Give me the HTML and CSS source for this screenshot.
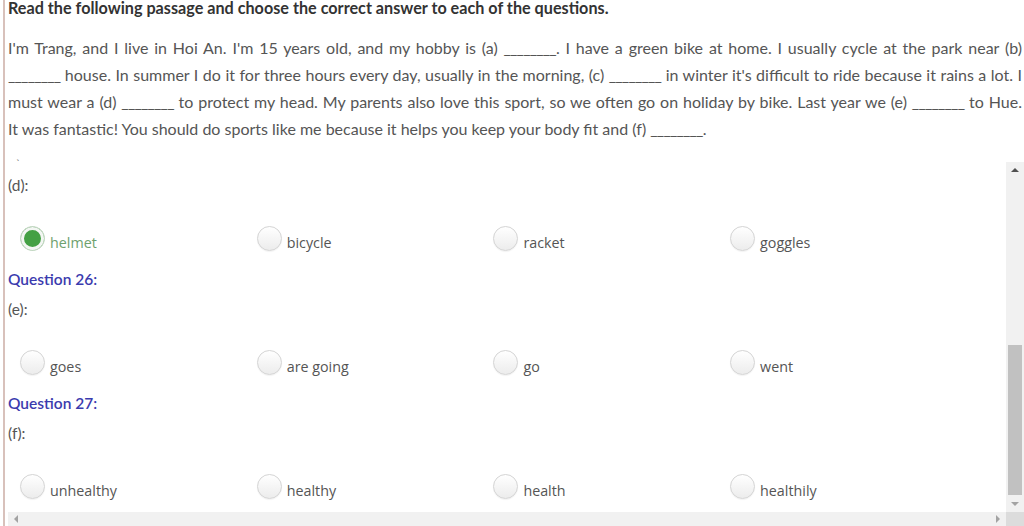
FILE: index.html
```html
<!DOCTYPE html>
<html lang="en">
<head>
<meta charset="utf-8">
<title>Reading passage</title>
<link rel="stylesheet" href="styles.css">
</head>
<body>
<div class="page">
  <h1 class="title">Read the following passage and choose the correct answer to each of the questions.</h1>
  <p class="passage">
    <span class="ln">I'm Trang, and I live in Hoi An. I'm 15 years old, and my hobby is (a) <span class="blank">________</span>. I have a green bike at home. I usually cycle at the park near (b)</span>
    <span class="ln"><span class="blank">________</span> house. In summer I do it for three hours every day, usually in the morning, (c) <span class="blank">________</span> in winter it's difficult to ride because it rains a lot. I</span>
    <span class="ln">must wear a (d) <span class="blank">________</span> to protect my head. My parents also love this sport, so we often go on holiday by bike. Last year we (e) <span class="blank">________</span> to Hue.</span>
    <span class="ln last">It was fantastic! You should do sports like me because it helps you keep your body fit and (f) <span class="blank">________</span>.</span>
  </p>
  <div class="tick">`</div>
  <div class="scroller">
    <div class="viewport">
      <div class="q first">
        <div class="label">(d):</div>
        <div class="options">
          <label class="opt checked"><span class="radio"></span><span class="otext">helmet</span></label>
          <label class="opt"><span class="radio"></span><span class="otext">bicycle</span></label>
          <label class="opt"><span class="radio"></span><span class="otext">racket</span></label>
          <label class="opt"><span class="radio"></span><span class="otext">goggles</span></label>
        </div>
      </div>
      <div class="q">
        <div class="qtitle">Question 26:</div>
        <div class="label">(e):</div>
        <div class="options">
          <label class="opt"><span class="radio"></span><span class="otext">goes</span></label>
          <label class="opt"><span class="radio"></span><span class="otext">are going</span></label>
          <label class="opt"><span class="radio"></span><span class="otext">go</span></label>
          <label class="opt"><span class="radio"></span><span class="otext">went</span></label>
        </div>
      </div>
      <div class="q">
        <div class="qtitle">Question 27:</div>
        <div class="label">(f):</div>
        <div class="options">
          <label class="opt"><span class="radio"></span><span class="otext">unhealthy</span></label>
          <label class="opt"><span class="radio"></span><span class="otext">healthy</span></label>
          <label class="opt"><span class="radio"></span><span class="otext">health</span></label>
          <label class="opt"><span class="radio"></span><span class="otext">healthily</span></label>
        </div>
      </div>
    </div>
    <div class="vbar">
      <div class="btn"><span class="arr up"></span></div>
      <div class="track"></div>
      <div class="thumb"></div>
      <div class="btn"><span class="arr down"></span></div>
    </div>
    <div class="hbar">
      <div class="btn"><span class="arr left"></span></div>
      <div class="htrack"></div>
      <div class="btn"><span class="arr right"></span></div>
    </div>
    <div class="corner"></div>
  </div>
</div>
</body>
</html>
```
FILE: styles.css
```css
* { box-sizing: border-box; }
html, body { margin: 0; padding: 0; background: #fff; }
body {
  font-family: Lato, "Open Sans", "Liberation Sans", sans-serif;
  color: #555;
  width: 1024px;
  height: 526px;
  overflow: hidden;
}
.page {
  margin-left: 3px;
  border-left: 2px solid #d8c1bb;
  padding-left: 3px;
  height: 526px;
  display: flex;
  flex-direction: column;
}
.title {
  margin: 0;
  font-size: 16.2px;
  line-height: 16px;
  font-weight: 700;
  color: #333;
}
.passage {
  margin: 18px 0 0 0;
  font-size: 16px;
  line-height: 27px;
  color: #555;
  padding-right: 2px;
}
.ln {
  display: block;
  text-align: justify;
  text-align-last: justify;
  word-spacing: -2px;
}
.ln.last { text-align-last: left; word-spacing: normal; }
.blank { letter-spacing: -0.8px; word-spacing: normal; }
.tick {
  height: 20px;
  padding: 12px 0 0 8px;
  font-size: 11px;
  line-height: 20px;
  color: #777;
}
.scroller {
  flex: 1;
  display: grid;
  grid-template-columns: 1fr 18px;
  grid-template-rows: 1fr 14px;
  min-height: 0;
}
.viewport {
  overflow: hidden;
  padding-top: 8px;
}
.label, .qtitle {
  font-size: 15.5px;
  line-height: 30px;
  height: 30px;
}
.qtitle {
  color: #3b3bae;
  font-weight: 600;
}
.options {
  display: grid;
  grid-template-columns: repeat(4, 236.7px);
  padding-left: 12px;
  margin-top: 26px;
  margin-bottom: 13px;
}
.opt {
  display: flex;
  align-items: flex-end;
  font-family: "Open Sans", "Noto Sans", sans-serif;
  font-size: 14.3px;
  color: #555;
}
.otext { line-height: 18px; margin-bottom: -1px; }
.radio {
  width: 25px;
  height: 25px;
  border-radius: 50%;
  border: 1px solid #d4d4d4;
  background: linear-gradient(#ffffff, #ececec);
  box-shadow: 0 1px 1px rgba(0,0,0,0.05);
  flex: none;
  margin-right: 5px;
}
.opt.checked .radio {
  background: #43a043;
  border: 1px solid #cfdccf;
  box-shadow: inset 0 0 0 3px #f3f6f3;
}
.opt.checked .otext { color: #6ea16e; }
.vbar {
  background: #f1f1f1;
  display: flex;
  flex-direction: column;
  align-items: center;
}
.vbar .btn { height: 16px; width: 18px; display: flex; align-items: center; justify-content: center; flex: none; }
.vbar .btn:last-child { height: 17px; }
.track { flex: 1; }
.thumb {
  width: 14px;
  height: 150px;
  background: #c1c1c1;
  flex: none;
}
.hbar {
  background: #f1f1f1;
  display: flex;
  align-items: center;
}
.hbar .btn { width: 16px; height: 14px; display: flex; align-items: center; justify-content: center; }
.htrack { flex: 1; }
.corner { background: #dcdcdc; }
.arr { width: 0; height: 0; border-style: solid; }
.arr.up { border-width: 0 4px 4px 4px; border-color: transparent transparent #505050 transparent; }
.arr.down { border-width: 4px 4px 0 4px; border-color: #a3a3a3 transparent transparent transparent; }
.arr.left { border-width: 4px 4px 4px 0; border-color: transparent #a3a3a3 transparent transparent; }
.arr.right { border-width: 4px 0 4px 4px; border-color: transparent transparent transparent #a3a3a3; }
```
